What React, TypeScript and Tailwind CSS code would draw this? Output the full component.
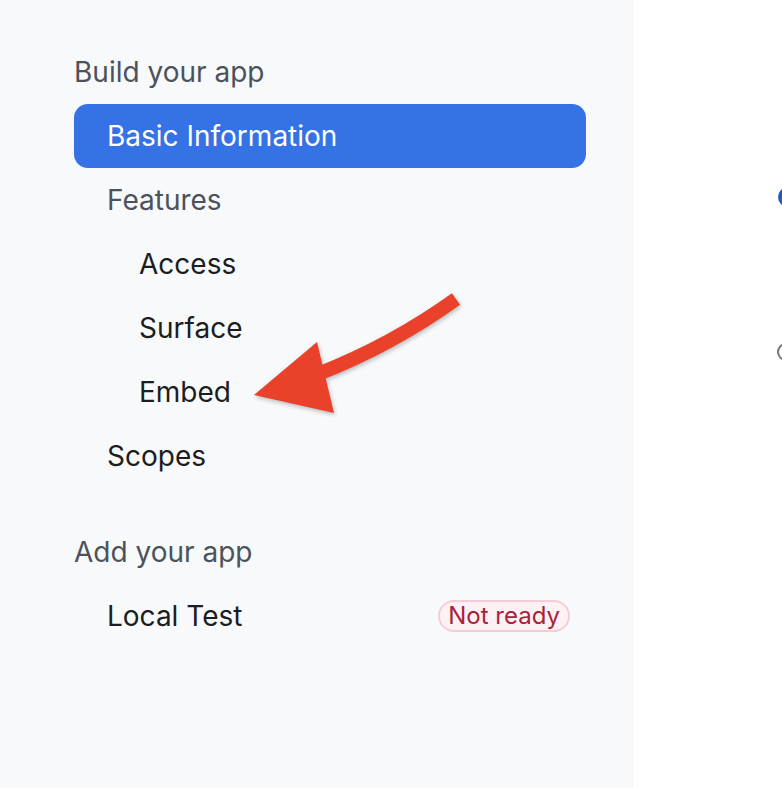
const font = { fontFamily: "Inter, 'Noto Sans', sans-serif" };

function NavRow({
  label,
  indent = 0,
  muted = false,
  active = false,
  badge,
}: {
  label: string;
  indent?: number;
  muted?: boolean;
  active?: boolean;
  badge?: string;
}) {
  const pad = indent === 2 ? "pl-[65px]" : "pl-[33px]";
  return (
    <div
      className={`flex h-16 items-center justify-between rounded-[14px] pr-4 ${pad} ${
        active ? "bg-[#3572e6] text-white" : muted ? "text-[#4b525b]" : "text-[#1b1d21]"
      }`}
    >
      <span className="text-[28px] leading-8">{label}</span>
      {badge && (
        <span className="flex h-8 items-center rounded-full border-2 border-[#f6cdd6] bg-[#fdf1f4] px-[8px] text-[24px] text-[#a8233a]">
          {badge}
        </span>
      )}
    </div>
  );
}

export default function App() {
  return (
    <div className="relative flex h-[788px] w-[782px] overflow-hidden bg-white" style={font}>
      <aside className="h-full w-[634px] bg-[#f8f9fb] pl-[74px] pr-[48px] pt-10">
        <div className="flex h-16 items-center text-[28px] text-[#4b525b]">Build your app</div>
        <NavRow label="Basic Information" active />
        <NavRow label="Features" muted />
        <NavRow label="Access" indent={2} />
        <NavRow label="Surface" indent={2} />
        <NavRow label="Embed" indent={2} />
        <NavRow label="Scopes" />
        <div className="mt-8 flex h-16 items-center text-[28px] text-[#4b525b]">Add your app</div>
        <NavRow label="Local Test" badge="Not ready" />
      </aside>

      <main className="relative flex-1">
        <span className="absolute left-[144px] top-[187px] h-5 w-5 rounded-full bg-[#2458c4]" />
        <span className="absolute left-[143px] top-[343px] h-[18px] w-[18px] rounded-full border-2 border-[#70757c]" />
      </main>

      <svg
        className="pointer-events-none absolute left-0 top-0"
        width="782"
        height="788"
        viewBox="0 0 782 788"
        style={{ filter: "drop-shadow(1px 2px 2px rgba(0,0,0,0.25))" }}
      >
        <path d="M 456 299 Q 392 345 318 374" fill="none" stroke="#e9412a" strokeWidth="14" />
        <polygon points="254,395 317,342 334,413" fill="#e9412a" />
      </svg>
    </div>
  );
}
